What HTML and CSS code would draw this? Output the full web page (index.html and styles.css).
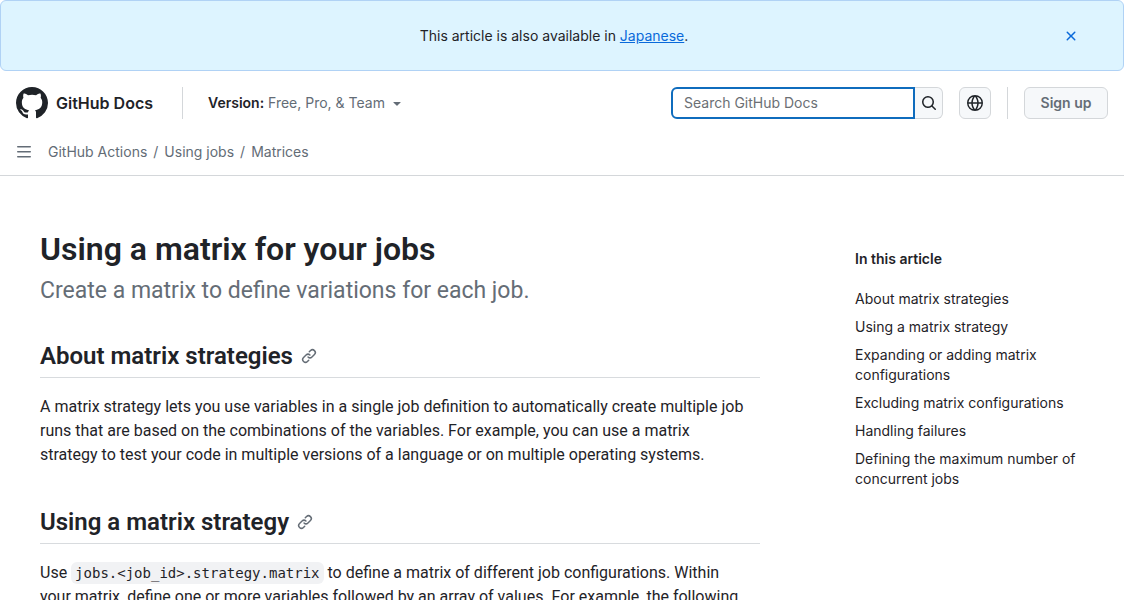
FILE: index.html
```html
<!DOCTYPE html>
<html lang="en">
<head>
<meta charset="utf-8">
<meta name="viewport" content="width=device-width, initial-scale=1">
<title>Using a matrix for your jobs - GitHub Docs</title>
<link rel="stylesheet" href="styles.css">
</head>
<body>
<div class="flash">
  <p class="flash-text">This article is also available in <a href="#ja">Japanese</a>.</p>
  <button class="flash-close" type="button" aria-label="Close">
    <svg width="16" height="16" viewBox="0 0 16 16" fill="currentColor"><path d="M3.72 3.72a.75.75 0 0 1 1.06 0L8 6.94l3.22-3.22a.749.749 0 0 1 1.275.326.749.749 0 0 1-.215.734L9.06 8l3.22 3.22a.749.749 0 0 1-.326 1.275.749.749 0 0 1-.734-.215L8 9.06l-3.22 3.22a.751.751 0 0 1-1.042-.018.751.751 0 0 1-.018-1.042L6.94 8 3.72 4.78a.75.75 0 0 1 0-1.06Z"/></svg>
  </button>
</div>
<header class="header">
  <div class="header-row">
    <a class="brand" href="#home">
      <svg width="32" height="32" viewBox="0 0 16 16" fill="currentColor" aria-hidden="true"><path d="M8 0c4.42 0 8 3.58 8 8a8.013 8.013 0 0 1-5.45 7.59c-.4.08-.55-.17-.55-.38 0-.27.01-1.13.01-2.2 0-.75-.25-1.23-.54-1.48 1.78-.2 3.65-.88 3.65-3.95 0-.88-.31-1.59-.82-2.15.08-.2.36-1.02-.08-2.12 0 0-.67-.22-2.2.82-.64-.18-1.32-.27-2-.27-.68 0-1.36.09-2 .27-1.53-1.03-2.2-.82-2.2-.82-.44 1.1-.16 1.92-.08 2.12-.51.56-.82 1.28-.82 2.15 0 3.06 1.86 3.75 3.64 3.95-.23.2-.44.55-.51 1.07-.46.21-1.61.55-2.33-.66-.15-.24-.6-.83-1.23-.82-.67.01-.27.38.01.53.34.19.73.9.82 1.13.16.45.68 1.31 2.69.94 0 .67.01 1.3.01 1.49 0 .21-.15.45-.55.38A7.995 7.995 0 0 1 0 8c0-4.42 3.58-8 8-8Z"/></svg>
      <span>GitHub Docs</span>
    </a>
    <button class="version" type="button">
      <span><b>Version:</b> Free, Pro, &amp; Team</span>
      <svg width="16" height="16" viewBox="0 0 16 16" fill="currentColor" aria-hidden="true"><path d="m4.427 7.427 3.396 3.396a.25.25 0 0 0 .354 0l3.396-3.396A.25.25 0 0 0 11.396 7H4.604a.25.25 0 0 0-.177.427Z"/></svg>
    </button>
    <form class="search">
      <input class="search-input" type="search" placeholder="Search GitHub Docs" aria-label="Search GitHub Docs">
      <button class="search-button" type="button" aria-label="Search">
        <svg width="16" height="16" viewBox="0 0 16 16" fill="currentColor"><path d="M10.68 11.74a6 6 0 0 1-7.922-8.982 6 6 0 0 1 8.982 7.922l3.04 3.04a.749.749 0 0 1-.326 1.275.749.749 0 0 1-.734-.215ZM11.5 7a4.499 4.499 0 1 0-8.997 0A4.499 4.499 0 0 0 11.5 7Z"/></svg>
      </button>
    </form>
    <button class="icon-button" type="button" aria-label="Select language">
      <svg width="16" height="16" viewBox="0 0 16 16" fill="currentColor"><path d="M8 0a8 8 0 1 1 0 16A8 8 0 0 1 8 0ZM5.78 8.75a9.64 9.64 0 0 0 1.363 4.177c.255.426.542.832.857 1.215.245-.296.551-.705.857-1.215A9.64 9.64 0 0 0 10.22 8.75Zm4.44-1.5a9.64 9.64 0 0 0-1.363-4.177c-.307-.51-.612-.919-.857-1.215a9.927 9.927 0 0 0-.857 1.215A9.64 9.64 0 0 0 5.78 7.25Zm-5.944 1.5H1.543a6.507 6.507 0 0 0 4.666 5.5c-.123-.181-.24-.365-.352-.552-.715-1.192-1.437-2.874-1.581-4.948Zm-2.733-1.5h2.733c.144-2.074.866-3.756 1.58-4.948.12-.197.237-.381.353-.552a6.507 6.507 0 0 0-4.666 5.5Zm10.181 1.5c-.144 2.074-.866 3.756-1.58 4.948-.12.197-.237.381-.353.552a6.507 6.507 0 0 0 4.666-5.5Zm2.733-1.5a6.507 6.507 0 0 0-4.666-5.5c.123.181.24.365.353.552.714 1.192 1.436 2.874 1.58 4.948Z"/></svg>
    </button>
    <div class="account"><a class="signup" href="#signup">Sign up</a></div>
  </div>
  <div class="crumb-row">
    <button class="menu-button" type="button" aria-label="Open sidebar">
      <svg width="16" height="16" viewBox="0 0 16 16" fill="currentColor"><path d="M1 2.75A.75.75 0 0 1 1.75 2h12.5a.75.75 0 0 1 0 1.5H1.75A.75.75 0 0 1 1 2.75Zm0 5A.75.75 0 0 1 1.75 7h12.5a.75.75 0 0 1 0 1.5H1.75A.75.75 0 0 1 1 7.75ZM1.75 12h12.5a.75.75 0 0 1 0 1.5H1.75a.75.75 0 0 1 0-1.5Z"/></svg>
    </button>
    <nav aria-label="Breadcrumb">
      <ol class="crumbs">
        <li><a href="#actions">GitHub Actions</a></li>
        <li><a href="#using-jobs">Using jobs</a></li>
        <li><a href="#matrices">Matrices</a></li>
      </ol>
    </nav>
  </div>
</header>
<main class="page">
  <article class="article">
    <h1>Using a matrix for your jobs</h1>
    <p class="lead">Create a matrix to define variations for each job.</p>
    <h2 id="about">About matrix strategies
      <a href="#about" aria-label="Link to About matrix strategies"><svg width="16" height="16" viewBox="0 0 16 16" fill="currentColor"><path d="m7.775 3.275 1.25-1.25a3.5 3.5 0 1 1 4.95 4.95l-2.5 2.5a3.5 3.5 0 0 1-4.95 0 .751.751 0 0 1 .018-1.042.751.751 0 0 1 1.042-.018 1.998 1.998 0 0 0 2.83 0l2.5-2.5a2.002 2.002 0 0 0-2.83-2.83l-1.25 1.25a.751.751 0 0 1-1.042-.018.751.751 0 0 1-.018-1.042Zm-4.69 9.64a1.998 1.998 0 0 0 2.83 0l1.25-1.25a.751.751 0 0 1 1.042.018.751.751 0 0 1 .018 1.042l-1.25 1.25a3.5 3.5 0 1 1-4.95-4.95l2.5-2.5a3.5 3.5 0 0 1 4.95 0 .751.751 0 0 1-.018 1.042.751.751 0 0 1-1.042.018 1.998 1.998 0 0 0-2.83 0l-2.5 2.5a1.998 1.998 0 0 0 0 2.83Z"/></svg></a>
    </h2>
    <p>A matrix strategy lets you use variables in a single job definition to automatically create multiple job runs that are based on the combinations of the variables. For example, you can use a matrix strategy to test your code in multiple versions of a language or on multiple operating systems.</p>
    <h2 id="using">Using a matrix strategy
      <a href="#using" aria-label="Link to Using a matrix strategy"><svg width="16" height="16" viewBox="0 0 16 16" fill="currentColor"><path d="m7.775 3.275 1.25-1.25a3.5 3.5 0 1 1 4.95 4.95l-2.5 2.5a3.5 3.5 0 0 1-4.95 0 .751.751 0 0 1 .018-1.042.751.751 0 0 1 1.042-.018 1.998 1.998 0 0 0 2.83 0l2.5-2.5a2.002 2.002 0 0 0-2.83-2.83l-1.25 1.25a.751.751 0 0 1-1.042-.018.751.751 0 0 1-.018-1.042Zm-4.69 9.64a1.998 1.998 0 0 0 2.83 0l1.25-1.25a.751.751 0 0 1 1.042.018.751.751 0 0 1 .018 1.042l-1.25 1.25a3.5 3.5 0 1 1-4.95-4.95l2.5-2.5a3.5 3.5 0 0 1 4.95 0 .751.751 0 0 1-.018 1.042.751.751 0 0 1-1.042.018 1.998 1.998 0 0 0-2.83 0l-2.5 2.5a1.998 1.998 0 0 0 0 2.83Z"/></svg></a>
    </h2>
    <p>Use <code>jobs.&lt;job_id&gt;.strategy.matrix</code> to define a matrix of different job configurations. Within your matrix, define one or more variables followed by an array of values. For example, the following</p>
  </article>
  <aside class="toc">
    <h2 id="toc-title">In this article</h2>
    <nav aria-labelledby="toc-title">
      <ul>
        <li><a href="#about">About matrix strategies</a></li>
        <li><a href="#using">Using a matrix strategy</a></li>
        <li><a href="#expanding">Expanding or adding matrix configurations</a></li>
        <li><a href="#excluding">Excluding matrix configurations</a></li>
        <li><a href="#failures">Handling failures</a></li>
        <li><a href="#concurrent">Defining the maximum number of concurrent jobs</a></li>
      </ul>
    </nav>
  </aside>
</main>
</body>
</html>
```
FILE: styles.css
```css
* { box-sizing: border-box; }
html { overflow: hidden; }
body {
  margin: 0;
  background: #fff;
  color: #1f2328;
  font: 14px/20px Inter, "Liberation Sans", sans-serif;
}
h1, h2, p, ul, ol { margin: 0; padding: 0; }
li { list-style: none; }
a { color: inherit; text-decoration: none; }
button, input { font: inherit; color: inherit; margin: 0; }
button { padding: 0; border: 0; background: none; cursor: pointer; }
svg { display: block; flex: none; }

.flash {
  display: flex;
  align-items: center;
  padding: 19px 44px 18px;
  border: 1px solid #b0d2f5;
  border-radius: 6px;
  background: #ddf4ff;
}
.flash-text { flex: 1; text-align: center; }
.flash-text a { color: #0969da; text-decoration: underline; }
.flash-close {
  padding: 8px 0;
  color: #0969da;
}

.header { border-bottom: 1px solid #d4d7da; }
.header-row { display: flex; align-items: center; padding: 16px 16px 0; }
.brand {
  display: flex;
  align-items: center;
  gap: 8px;
  height: 32px;
  padding-right: 29px;
  border-right: 1px solid #d4d7da;
  font-size: 16px;
  font-weight: 600;
}
.version {
  display: flex;
  align-items: center;
  gap: 4px;
  margin-left: 25px;
  color: #636c76;
}
.version b { color: #1f2328; font-weight: 600; }
.search { display: flex; margin-left: auto; }
.search-input {
  width: 244px;
  height: 32px;
  padding: 0 11px 2px;
  border: 2px solid #0f6cbd;
  border-radius: 6px 0 0 6px;
  background: #fff;
  outline: 0;
  appearance: none;
}
.search-input::placeholder { color: #6b6f74; opacity: 1; }
.search-button, .icon-button, .signup {
  display: flex;
  align-items: center;
  justify-content: center;
  height: 32px;
  border: 1px solid #d4d7da;
  border-radius: 6px;
  background: #f6f8fa;
}
.search-button { width: 28px; border-left: 0; border-radius: 0 6px 6px 0; }
.icon-button { width: 32px; margin-left: 16px; }
.account { margin-left: 16px; padding-left: 16px; border-left: 1px solid #d4d7da; }
.signup { min-width: 84px; padding: 0 15px; color: #656d76; font-weight: 600; }

.crumb-row {
  display: flex;
  align-items: center;
  gap: 16px;
  padding: 23px 16px 13px;
  color: #636c76;
}
.crumbs { display: flex; }
.crumbs li + li::before { content: "/"; padding: 0 6px; }

.page {
  display: grid;
  grid-template-columns: minmax(0, 720px) 229px;
  justify-content: space-between;
  gap: 48px;
  padding: 49px 40px 0;
}
.article { font: 16px/24px Roboto, "Liberation Sans", sans-serif; }
.article p { max-width: 708px; }
.article h1 { font-size: 32px; line-height: 48px; font-weight: 600; }
.article .lead { color: #656d76; font-size: 23px; line-height: 36px; }
.article h2 {
  display: flex;
  align-items: center;
  gap: 8px;
  margin: 37px 0 17px;
  padding-bottom: 3px;
  border-bottom: 1px solid #d8dbde;
  font-size: 24px;
  line-height: 36px;
  font-weight: 600;
}
.article h2 a { color: #656d76; }
.article .lead + h2 { margin-top: 29px; }
code {
  padding: 3px 4px;
  border-radius: 6px;
  background: #f1f2f4;
  font: 14px/20px "DejaVu Sans Mono", monospace;
}
.toc { padding-top: 24px; }
.toc h2 { font-size: 14px; font-weight: 600; }
.toc ul { display: grid; gap: 8px; margin-top: 20px; }
```
